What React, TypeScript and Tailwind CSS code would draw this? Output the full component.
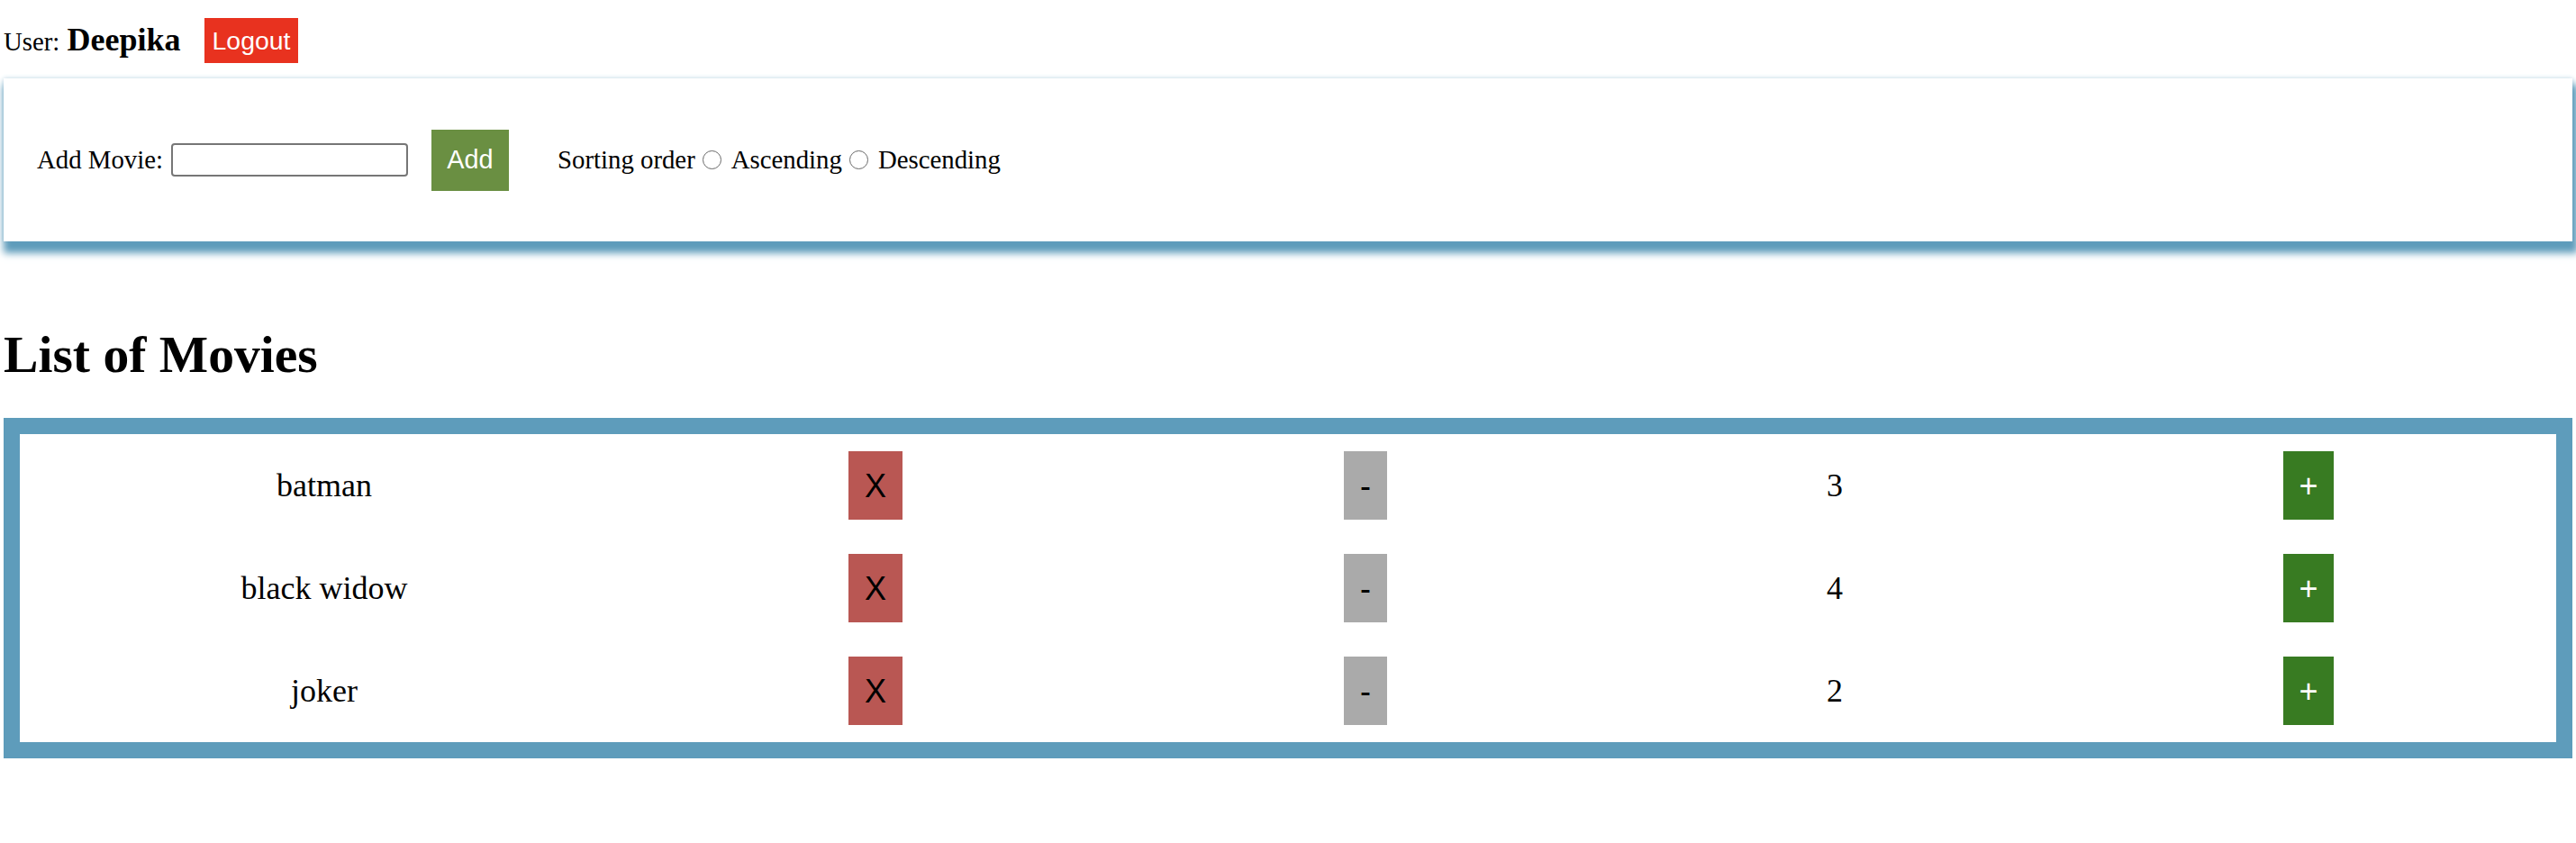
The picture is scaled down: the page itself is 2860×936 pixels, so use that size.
import React from "react";

const movies = [
  { name: "batman", count: 3 },
  { name: "black widow", count: 4 },
  { name: "joker", count: 2 },
];

function Radio() {
  return (
    <span className="inline-block w-[21px] h-[21px] rounded-full border-[1.5px] border-[#686868] bg-white shrink-0" />
  );
}

export default function App() {
  return (
    <div className="min-h-[936px] bg-white text-black px-[4px] font-['Liberation_Serif','Times_New_Roman',serif] text-[28.8px]">
      <div className="flex items-center pt-[20px] h-[70px]">
        <span className="leading-[33px]">
          User: <b className="text-[36px] ml-[1px]">Deepika</b>
        </span>
        <button className="ml-[26px] h-[50px] px-[9px] bg-[#e8321f] text-white font-['Liberation_Sans',Arial,sans-serif] text-[28.4px] leading-[33px]">
          Logout
        </button>
      </div>

      <div className="mt-[17px] h-[181px] flex items-center pl-[37px] bg-white shadow-[3px_10px_8px_3px_#5e9cbb,0_0_5px_#c3d9e5]">
        <span className="leading-[33px]">Add Movie:</span>
        <input
          type="text"
          className="ml-[9px] w-[263px] h-[37px] border-2 border-[#767676] rounded-[4px] bg-white outline-none"
        />
        <button className="ml-[26px] w-[86px] h-[68px] bg-[#6a8f42] text-white font-['Liberation_Sans',Arial,sans-serif] text-[28.8px] leading-[33px]">
          Add
        </button>
        <span className="ml-[54px] leading-[33px]">Sorting order</span>
        <span className="ml-[8px] flex"><Radio /></span>
        <span className="ml-[11px] leading-[33px]">Ascending</span>
        <span className="ml-[8px] flex"><Radio /></span>
        <span className="ml-[11px] leading-[33px]">Descending</span>
      </div>

      <h1 className="mt-[93px] mb-[38px] text-[57.6px] leading-[65px] font-bold">List of Movies</h1>

      <div className="border-[18px] border-[#5e9cbb] w-[2852px]">
        {movies.map((m) => (
          <div
            key={m.name}
            className="grid grid-cols-[676px_548px_540px_502px_550px] h-[114px] items-center justify-items-center text-[36px]"
          >
            <span className="leading-[41px]">{m.name}</span>
            <button className="w-[60px] h-[76px] bg-[#b95753] text-black font-['Liberation_Sans',Arial,sans-serif] text-[36px] leading-[41px]">
              X
            </button>
            <button className="w-[48px] h-[76px] bg-[#aaaaaa] text-black font-['Liberation_Sans',Arial,sans-serif] text-[36px] leading-[41px]">
              -
            </button>
            <span className="leading-[41px]">{m.count}</span>
            <button className="w-[56px] h-[76px] bg-[#387b22] text-white font-['Liberation_Sans',Arial,sans-serif] text-[36px] leading-[41px]">
              +
            </button>
          </div>
        ))}
      </div>
    </div>
  );
}
